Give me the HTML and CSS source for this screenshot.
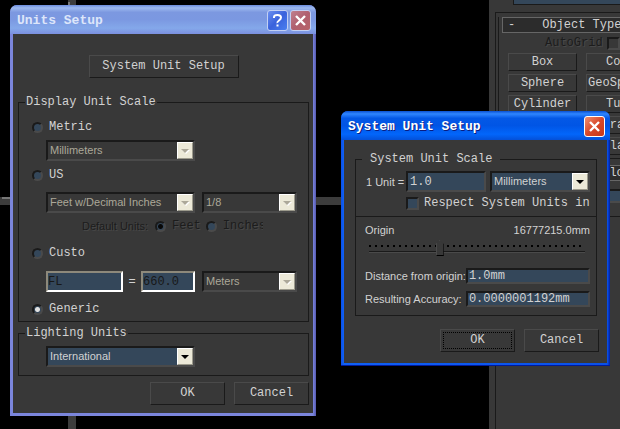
FILE: index.html
```html
<!DOCTYPE html>
<html lang="en">
<head>
<meta charset="utf-8">
<title>Units Setup</title>
<link rel="stylesheet" href="styles.css">
</head>
<body>
<main class="workspace">
  <div class="viewports">
    <div class="pane lit"></div><div class="pane"></div>
    <div class="pane"></div><div class="pane"></div>
  </div>
  <aside class="panel">
    <div class="category"></div>
    <div class="rollouts">
      <section class="rollout">
        <button class="rollout-title"><span>-</span><span>Object Type</span></button>
        <label class="autogrid dim">AutoGrid <input class="check" type="checkbox" disabled></label>
        <div class="objects">
          <button class="btn">Box</button><button class="btn">Cone</button>
          <button class="btn">Sphere</button><button class="btn">GeoSphere</button>
          <button class="btn">Cylinder</button><button class="btn">Tube</button>
          <button class="btn">Torus</button><button class="btn">Pyramid</button>
          <button class="btn">Teapot</button><button class="btn">Plane</button>
        </div>
      </section>
      <section class="rollout">
        <button class="rollout-title"><span>-</span><span class="wide-name">Name and Color</span></button>
        <input class="field object-name" type="text" aria-label="Object name">
      </section>
    </div>
  </aside>
</main>

<section class="window units" aria-labelledby="units-title">
  <header class="titlebar">
    <h1 id="units-title">Units Setup</h1>
    <button class="caption help" aria-label="Help"><svg viewBox="0 0 19 19"><path d="M6 7V6q0-2 3.500-2T13 6.500Q13 8 11 9.500T9.500 12M9.500 13.500v2" fill="none" stroke="#fff" stroke-width="2"/></svg></button>
    <button class="caption close" aria-label="Close"><svg viewBox="0 0 19 19"><path d="M5 5l9 9M14 5l-9 9" fill="none" stroke="#fff" stroke-width="2.400"/></svg></button>
  </header>
  <div class="client">
    <button class="btn system">System Unit Setup</button>
    <fieldset class="group display">
      <legend>Display Unit Scale</legend>
      <label class="choice"><input class="radio" type="radio" name="scale">Metric</label>
      <div class="values metric">
        <span class="combo off"><select aria-label="Metric unit" disabled><option>Millimeters</option></select><svg viewBox="0 0 14 15"><path class="shine" d="M4 7h8l-4 4z"/><path d="M3 6h8l-4 4z"/></svg></span>
      </div>
      <label class="choice"><input class="radio" type="radio" name="scale">US</label>
      <div class="values us">
        <span class="combo off"><select aria-label="US unit" disabled><option>Feet w/Decimal Inches</option></select><svg viewBox="0 0 14 15"><path class="shine" d="M4 7h8l-4 4z"/><path d="M3 6h8l-4 4z"/></svg></span>
        <span class="combo off"><select aria-label="Fraction" disabled><option>1/8</option></select><svg viewBox="0 0 14 15"><path class="shine" d="M4 7h8l-4 4z"/><path d="M3 6h8l-4 4z"/></svg></span>
      </div>
      <div class="defaults dim">
        <span class="ui">Default Units:</span>
        <label><input class="radio" type="radio" name="default" checked disabled>Feet</label>
        <label><input class="radio" type="radio" name="default" disabled><span class="cut">Inches</span></label>
      </div>
      <label class="choice"><input class="radio" type="radio" name="scale">Custo</label>
      <div class="values custom">
        <div class="equation">
          <input class="sunken" type="text" value="FL" aria-label="Custom unit name" disabled>
          <span>=</span>
          <input class="sunken" type="text" value="660.0" aria-label="Custom unit amount" disabled>
        </div>
        <span class="combo off"><select aria-label="Custom base unit" disabled><option>Meters</option></select><svg viewBox="0 0 14 15"><path class="shine" d="M4 7h8l-4 4z"/><path d="M3 6h8l-4 4z"/></svg></span>
      </div>
      <label class="choice"><input class="radio" type="radio" name="scale" checked>Generic</label>
    </fieldset>
    <fieldset class="group lighting">
      <legend>Lighting Units</legend>
      <div class="values">
        <span class="combo"><select aria-label="Lighting units"><option>International</option></select><svg viewBox="0 0 14 15"><path d="M3 6h8l-4 4z"/></svg></span>
      </div>
    </fieldset>
    <footer class="actions"><button class="btn">OK</button><button class="btn">Cancel</button></footer>
  </div>
</section>

<section class="window sysunit" aria-labelledby="sys-title">
  <header class="titlebar">
    <h2 id="sys-title">System Unit Setup</h2>
    <button class="caption close" aria-label="Close"><svg viewBox="0 0 19 19"><path d="M5 5l9 9M14 5l-9 9" fill="none" stroke="#fff" stroke-width="2.400"/></svg></button>
  </header>
  <div class="client">
    <fieldset class="group scale">
      <legend>System Unit Scale</legend>
      <div class="unit-row">
        <label class="ui" for="unit">1 Unit =</label>
        <input id="unit" class="field" type="text" value="1.0">
        <span class="combo"><select aria-label="System unit"><option>Millimeters</option></select><svg viewBox="0 0 14 15"><path d="M3 6h8l-4 4z"/></svg></span>
      </div>
      <label class="respect"><input class="check" type="checkbox">Respect System Units in</label>
      <hr>
      <div class="origin ui"><label for="origin">Origin</label><output for="origin">16777215.0mm</output></div>
      <input id="origin" class="slider" type="range" min="0" max="100" value="32">
      <div class="readouts">
        <label class="ui" for="distance">Distance from origin:</label><input id="distance" class="field" type="text" value="1.0mm">
        <label class="ui" for="accuracy">Resulting Accuracy:</label><input id="accuracy" class="field" type="text" value="0.0000001192mm">
      </div>
    </fieldset>
    <footer class="actions"><button class="btn default">OK</button><button class="btn">Cancel</button></footer>
  </div>
</section>
</body>
</html>
```
FILE: styles.css
```css
* { box-sizing: border-box; }

:root {
  --face: #383838;
  --dark: #1a1a1a;
  --light: #4a4a4a;
  --text: #d2d2d2;
  --well: #34475a;
  --mono: "Liberation Mono", monospace;
  --sans: "Liberation Sans", sans-serif;
}

body {
  margin: 0;
  height: 100vh;
  overflow: hidden;
  background: #000;
  color: var(--text);
  font: 12px/16px var(--mono);
}

button, input, select { font: inherit; color: inherit; margin: 0; }
h1, h2 { margin: 0; font: bold 13px/16px var(--mono); white-space: nowrap; }
.ui { font: 11px/16px var(--sans); white-space: nowrap; }
.dim { color: #1c1c1c; text-shadow: 1px 1px #484848; }

/* Background application */
.workspace { display: flex; height: 100vh; }
.viewports {
  flex: 1;
  display: grid;
  grid-template: 197px 1fr / 68px 1fr;
  gap: 8px;
  background: #3c3c3c;
}
.pane { background: #000; }
.pane.lit { box-shadow: 2px 2px #777; }
.panel {
  width: 131px;
  padding-left: 6px;
  background: var(--face);
  overflow: hidden;
}
.category {
  height: 5px;
  margin: 0 0 7px 18px;
  border: solid var(--dark);
  border-width: 0 0 1px 1px;
  background: var(--well);
}
.rollouts {
  width: 180px;
  height: 100vh;
  padding: 4px 2px;
  border: 1px solid var(--dark);
}
.rollout {
  padding: 0 4px 3px 3px;
  margin-bottom: 6px;
  border-left: 1px solid var(--dark);
  border-bottom: 1px solid var(--dark);
}
.rollout-title {
  display: flex;
  width: 100%;
  height: 16px;
  padding: 0 5px;
  gap: 27px;
  border: 1px solid #666;
  background: #2c2c2c;
  line-height: 14px;
  white-space: nowrap;
}
.wide-name { margin-left: -12px; }
.autogrid {
  display: flex;
  gap: 4px;
  align-items: center;
  height: 20px;
  padding-left: 43px;
}
.objects {
  display: grid;
  grid-template-columns: 69px 69px;
  gap: 3px 9px;
  padding-left: 6px;
}
.objects .btn { height: 18px; line-height: 16px; }
.object-name { display: block; width: 125px; height: 14px; margin: 8px 0 10px 6px; }

/* Controls */
.btn {
  height: 23px;
  padding: 0 0 2px;
  border: 1px solid;
  border-color: var(--light) var(--dark) var(--dark) var(--light);
  background: var(--face);
  white-space: nowrap;
}
.objects .btn { padding: 0; }
.btn.default { outline: 1px dotted #000; outline-offset: -4px; }
.field {
  min-width: 0;
  padding: 0 2px;
  border: 2px solid;
  border-color: var(--dark) var(--light) var(--light) var(--dark);
  border-radius: 0;
  background: var(--well);
}
.sunken {
  min-width: 0;
  width: 100%;
  height: 21px;
  padding: 0;
  border: 2px solid;
  border-color: #8d897b #fff #fff #8d897b;
  background: var(--well);
  color: #181818;
}
.combo {
  position: relative;
  display: block;
  height: 21px;
  border: 2px solid;
  border-color: var(--dark) var(--light) var(--light) var(--dark);
  background: var(--well);
}
.combo select {
  appearance: none;
  display: block;
  width: 100%;
  height: 17px;
  padding: 0 17px 0 2px;
  border: 0;
  border-radius: 0;
  background: none;
  font: 11px/17px var(--sans);
  opacity: 1;
}
.combo svg {
  position: absolute;
  top: 0;
  right: 0;
  width: 16px;
  height: 17px;
  border: 1px solid;
  border-color: #fff #9c9a8c #9c9a8c #fff;
  background: #ece9d8;
  pointer-events: none;
}
.combo.off { background: var(--face); color: #aca899; }
.combo.off path { fill: #aca899; }
.combo.off .shine { fill: #fff; }
.radio {
  appearance: none;
  flex: none;
  width: 11px;
  height: 11px;
  border: 2px solid;
  border-color: var(--dark) var(--light) var(--light) var(--dark);
  border-radius: 50%;
  background: var(--well);
}
.radio:checked { background: radial-gradient(circle, #e0e0e0 2px, var(--well) 3px); }
.radio:checked:disabled { background: radial-gradient(circle, #080808 2px, var(--well) 3px); }
.check {
  appearance: none;
  flex: none;
  width: 13px;
  height: 13px;
  border: 2px solid;
  border-color: var(--dark) var(--light) var(--light) var(--dark);
  background: var(--well);
}
.check:disabled { background: var(--face); }
.group {
  min-width: 0;
  margin: 0;
  padding: 0;
  border: 1px solid var(--dark);
}
.group legend { line-height: 14px; margin-left: 6px; padding: 0 1px; }

/* Windows */
.window { position: absolute; border-radius: 7px 7px 0 0; }
.client { margin: 0 3px; background: var(--face); }
.titlebar {
  display: flex;
  align-items: center;
  gap: 2px;
  height: 29px;
  padding: 2px 5px 0 7px;
  border-radius: 7px 7px 0 0;
}
.titlebar h1, .titlebar h2 { flex: 1; }
.caption {
  width: 21px;
  height: 21px;
  padding: 0;
  border: 1px solid #fff;
  border-radius: 3px;
}
.caption svg { display: block; width: 19px; height: 19px; }
.actions { display: flex; justify-content: flex-end; gap: 9px; }
.actions .btn { width: 75px; }

.units {
  left: 10px;
  top: 5px;
  width: 306px;
  padding-bottom: 3px;
  background: linear-gradient(90deg, #7b86dc, #7b86dc 99%, #5558b0);
}
.units .titlebar {
  background: linear-gradient(#6a8bdc, #9db9ef 10%, #7c98e0 25%, #7b98e1 50%, #84a8ea 80%, #7b90df);
  color: #dde6fa;
}
.units .caption { border-color: #c2d0f4; }
.help { background: linear-gradient(135deg, #6b8ff0, #3a62dc 50%, #4a80f0); }
.units .close { background: linear-gradient(135deg, #c0808f, #b06070 50%, #b86468); }
.units .client { padding: 21px 4px 8px 5px; }
.system { display: block; width: 150px; margin: 0 auto 17px; }
.display { padding: 10px 12px 4px 13px; }
.display legend { margin-left: -7px; }
.choice { display: flex; align-items: center; gap: 6px; height: 16px; }
.values {
  display: grid;
  grid-template-columns: 149px 95px;
  gap: 7px;
  padding-left: 14px;
}
.metric { margin: 5px 0 6px; }
.us { margin: 9px 0 5px; }
.custom { margin: 10px 0 9px; }
.equation {
  display: grid;
  grid-template-columns: 77px 18px 54px;
  align-items: center;
  text-align: center;
}
.defaults { display: flex; gap: 5px; height: 16px; margin-bottom: 11px; padding-left: 50px; }
.defaults .ui { width: 68px; }
.defaults label { display: flex; align-items: center; gap: 6px; }
.cut { width: 40px; overflow: hidden; }
.lighting { margin-top: 4px; }
.lighting .values { padding: 6px 0 8px 27px; }
.units .actions { margin-top: 6px; }

.sysunit {
  left: 341px;
  top: 111px;
  width: 269px;
  padding-bottom: 3px;
  background: linear-gradient(90deg, #0a4fe8, #1060f4 1%, #0a50e8 99%, #001fa0);
  box-shadow: inset 0 -1px #001a9c;
}
.sysunit .titlebar {
  background: linear-gradient(#0a50d0, #2f86ff 10%, #0458e6 25%, #0055e5 50%, #0266fb 80%, #0450d8);
  color: #fff;
  text-shadow: 1px 1px #0a1c80;
}
.sysunit .close { background: linear-gradient(135deg, #f09070, #d8482a 50%, #c83818); }
.sysunit .client { padding: 12px 8px 11px 11px; }
.scale { margin-right: 2px; }
.scale legend { padding: 0 8px; }
.unit-row {
  display: grid;
  grid-template-columns: 40px 80px 1fr;
  align-items: center;
  margin: 5px 6px 3px 10px;
}
.unit-row .field { height: 21px; }
.unit-row .combo { margin-left: 4px; }
.respect {
  display: flex;
  align-items: center;
  gap: 5px;
  height: 16px;
  margin: 0 0 5px 50px;
  white-space: nowrap;
}
hr { margin: 0; border: 0; border-top: 1px solid var(--dark); }
.origin { display: flex; justify-content: space-between; padding: 5px 6px 0 9px; }
.slider {
  appearance: none;
  display: block;
  width: calc(100% - 24px);
  height: 18px;
  margin: 1px 11px 11px 13px;
  background:
    repeating-linear-gradient(90deg, #000 0 2px, transparent 2px 6px) 0 6px / 100% 2px no-repeat,
    linear-gradient(var(--dark) 50%, var(--light) 50%) 0 12px / 100% 2px no-repeat;
}
.slider::-webkit-slider-thumb {
  appearance: none;
  width: 8px;
  height: 16px;
  border: 1px solid;
  border-color: var(--light) #000 #000 var(--light);
  background: var(--face);
  clip-path: polygon(0 4px, 50% 0, 100% 4px, 100% 100%, 0 100%);
}
.readouts {
  display: grid;
  grid-template-columns: auto 1fr;
  gap: 7px 0;
  align-items: center;
  margin: 0 6px 8px 9px;
}
.readouts .ui { line-height: 14px; }
.readouts .field { width: 100%; height: 16px; padding: 0 1px; }
.sysunit .actions { margin-top: 13px; }
```
